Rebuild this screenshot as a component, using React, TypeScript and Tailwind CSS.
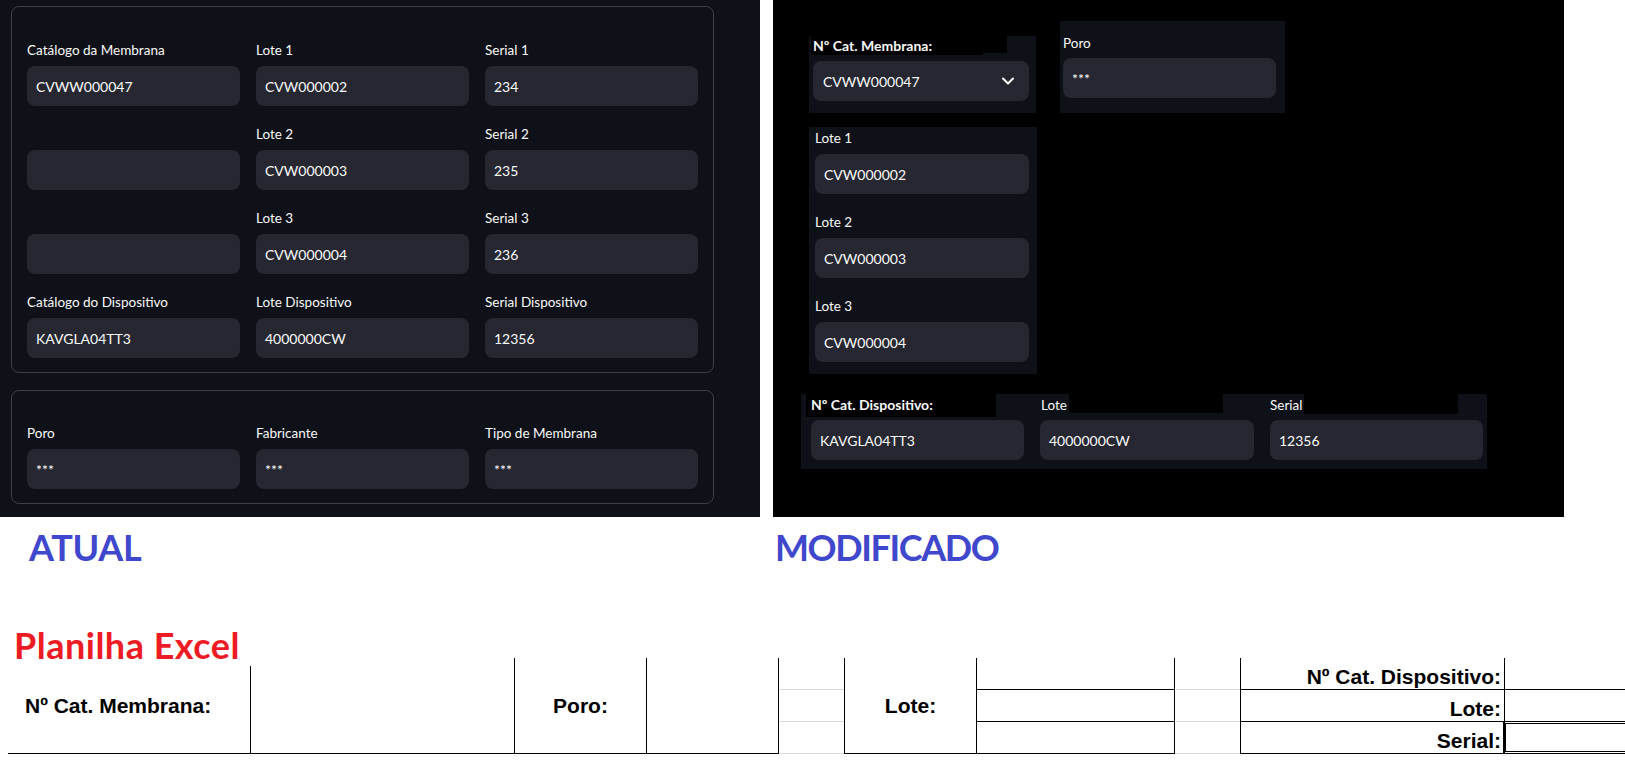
import { ChevronDown } from 'lucide-react'

const st = { fontFamily: 'Lato, "Noto Sans", sans-serif' }

function Field({ label, value }: { label?: string; value?: string }) {
    return (
        <div className="flex flex-col">
            <div className="h-[22px] mb-[5px] text-[13.5px] leading-[22px] text-[#fafafa]">{label}</div>
            <div className="h-[40px] rounded-lg bg-[#262730] pl-[9px] flex items-center text-[14px] text-[#fafafa]">
                {value}
            </div>
        </div>
    )
}

function Input({ value, className = '' }: { value: string; className?: string }) {
    return (
        <div className={`h-[40px] rounded-lg bg-[#262730] pl-[9px] flex items-center text-[14px] text-[#fafafa] ${className}`}>
            {value}
        </div>
    )
}

function CurrentPanel() {
    return (
        <div className="w-[760px] h-[517px] bg-[#0e1117] pl-[11px] pt-[6px]" style={st}>
            <div className="w-[703px] rounded-lg border border-[#3d3f45] px-[15px] pt-[32px] pb-[14px]">
                <div className="grid grid-cols-3 gap-x-[16px] gap-y-[17px]">
                    <Field label="Catálogo da Membrana" value="CVWW000047" />
                    <Field label="Lote 1" value="CVW000002" />
                    <Field label="Serial 1" value="234" />
                    <Field />
                    <Field label="Lote 2" value="CVW000003" />
                    <Field label="Serial 2" value="235" />
                    <Field />
                    <Field label="Lote 3" value="CVW000004" />
                    <Field label="Serial 3" value="236" />
                    <Field label="Catálogo do Dispositivo" value="KAVGLA04TT3" />
                    <Field label="Lote Dispositivo" value="4000000CW" />
                    <Field label="Serial Dispositivo" value="12356" />
                </div>
            </div>
            <div className="mt-[17px] w-[703px] rounded-lg border border-[#3d3f45] px-[15px] pt-[31px] pb-[14px]">
                <div className="grid grid-cols-3 gap-x-[16px]">
                    <Field label="Poro" value="***" />
                    <Field label="Fabricante" value="***" />
                    <Field label="Tipo de Membrana" value="***" />
                </div>
            </div>
        </div>
    )
}

function ModifiedPanel() {
    return (
        <div className="w-[791px] h-[517px] bg-black pt-[21px] text-[#fafafa]" style={st}>
            <div className="flex items-end gap-[24px] pl-[36px]">
                {/* Nº Cat. Membrana */}
                <div className="w-[227px] h-[77px] bg-[#0e1117]">
                    <div className="flex h-[19px]">
                        <div className="ml-[2px] w-[172px] h-[19px] bg-black pl-[2px] text-[14px] font-bold leading-[19px] whitespace-nowrap">
                            Nº Cat. Membrana:
                        </div>
                        <div className="w-[24px] h-[17px] bg-black" />
                    </div>
                    <div className="mt-[6px] ml-[4px] w-[216px] h-[40px] rounded-lg bg-[#262730] pl-[10px] pr-[11px] flex items-center justify-between text-[14px]">
                        <span>CVWW000047</span>
                        <ChevronDown size={20} strokeWidth={2.5} />
                    </div>
                </div>
                {/* Poro */}
                <div className="w-[225px] h-[92px] bg-[#0e1117] pl-[3px] pt-[11px]">
                    <div className="h-[22px] mb-[4px] text-[13.5px] leading-[22px]">Poro</div>
                    <Input value="***" className="w-[213px]" />
                </div>
            </div>

            <div className="mt-[14px] ml-[36px] w-[228px] h-[247px] bg-[#0e1117] pl-[6px] pr-[8px] flex flex-col gap-[17px]">
                <Field label="Lote 1" value="CVW000002" />
                <Field label="Lote 2" value="CVW000003" />
                <Field label="Lote 3" value="CVW000004" />
            </div>

            <div className="mt-[20px] ml-[28px] w-[686px] h-[75px] bg-[#0e1117] pl-[10px]">
                <div className="grid grid-cols-[213px_214px_213px] gap-x-[16px]">
                    <div>
                        <div className="-ml-[5px] w-[190px] h-[23px] bg-black pl-[5px] text-[14px] font-bold leading-[22px]">
                            Nº Cat. Dispositivo:
                        </div>
                        <Input value="KAVGLA04TT3" className="mt-[3px]" />
                    </div>
                    <div>
                        <div className="flex h-[23px]">
                            <span className="pl-px text-[13.5px] leading-[22px]">Lote</span>
                            <div className="ml-[2px] w-[154px] h-[19px] bg-black" />
                        </div>
                        <Input value="4000000CW" className="mt-[3px]" />
                    </div>
                    <div>
                        <div className="flex h-[23px]">
                            <span className="text-[13.5px] leading-[22px]">Serial</span>
                            <div className="ml-[2px] w-[154px] h-[20px] bg-black" />
                        </div>
                        <Input value="12356" className="mt-[3px]" />
                    </div>
                </div>
            </div>
        </div>
    )
}

function Row({ children, line = 'border-black', className = '' }: { children?: React.ReactNode; line?: string; className?: string }) {
    return <div className={`h-[32px] border-b ${line} flex items-end ${className}`}>{children}</div>
}

function ExcelSheet() {
    const xl = { fontFamily: '"Liberation Sans", Arial, sans-serif' }
    return (
        <div className="flex ml-[8px] h-[96px] text-black text-[21px] font-bold leading-[24px]" style={xl}>
            <div className="w-[242px] shrink-0 border-b border-black flex items-center pl-[17px] whitespace-nowrap">Nº Cat. Membrana:</div>
            <div className="w-[264px] shrink-0 border-b border-black flex flex-col">
                <div className="h-[8px]" />
                <div className="flex-1 border-l border-black" />
            </div>
            <div className="w-[132px] shrink-0 border-l border-b border-black flex items-center justify-center">Poro:</div>
            <div className="w-[132px] shrink-0 border-l border-b border-black" />
            <div className="w-[66px] shrink-0 border-l border-black flex flex-col">
                <Row line="border-[#d9d9d9]" />
                <Row line="border-[#d9d9d9]" />
                <Row line="border-[#d9d9d9]" />
            </div>
            <div className="w-[132px] shrink-0 border-l border-b border-black flex items-center justify-center">Lote:</div>
            <div className="w-[198px] shrink-0 border-l border-black flex flex-col">
                <Row />
                <Row />
                <Row />
            </div>
            <div className="w-[66px] shrink-0 border-l border-black flex flex-col">
                <Row line="border-[#d9d9d9]" />
                <Row line="border-[#d9d9d9]" />
                <Row line="border-[#d9d9d9]" />
            </div>
            <div className="w-[264px] shrink-0 border-l border-black flex flex-col whitespace-nowrap">
                <Row className="justify-end pr-[3px]">Nº Cat. Dispositivo:</Row>
                <Row className="justify-end pr-[3px]">Lote:</Row>
                <Row className="justify-end pr-[3px]">Serial:</Row>
            </div>
            <div className="w-[200px] shrink-0 border-l border-black flex flex-col">
                <Row />
                <Row />
                <div className="h-[33px] -mt-px -ml-[2px] border-[3px] border-double border-black" />
            </div>
        </div>
    )
}

export default function App() {
    const heading = { fontFamily: 'Lato, "Open Sans", sans-serif' }
    return (
        <div className="w-[1625px] h-[773px] bg-white overflow-hidden">
            <div className="flex h-[517px]">
                <CurrentPanel />
                <div className="w-[13px]" />
                <ModifiedPanel />
            </div>

            <div className="flex mt-[12px] h-[36px] text-[36px] leading-[36px] font-bold text-[#3f48cc]" style={heading}>
                <div className="ml-[29px] w-[746px] tracking-[-0.3px]">ATUAL</div>
                <div className="tracking-[-1.4px]">MODIFICADO</div>
            </div>

            <div className="mt-[67px] ml-[14px] h-[26px] text-[36px] leading-[26px] font-bold text-[#ed1c24] tracking-[0.5px]" style={heading}>
                Planilha Excel
            </div>

            <ExcelSheet />
        </div>
    )
}
